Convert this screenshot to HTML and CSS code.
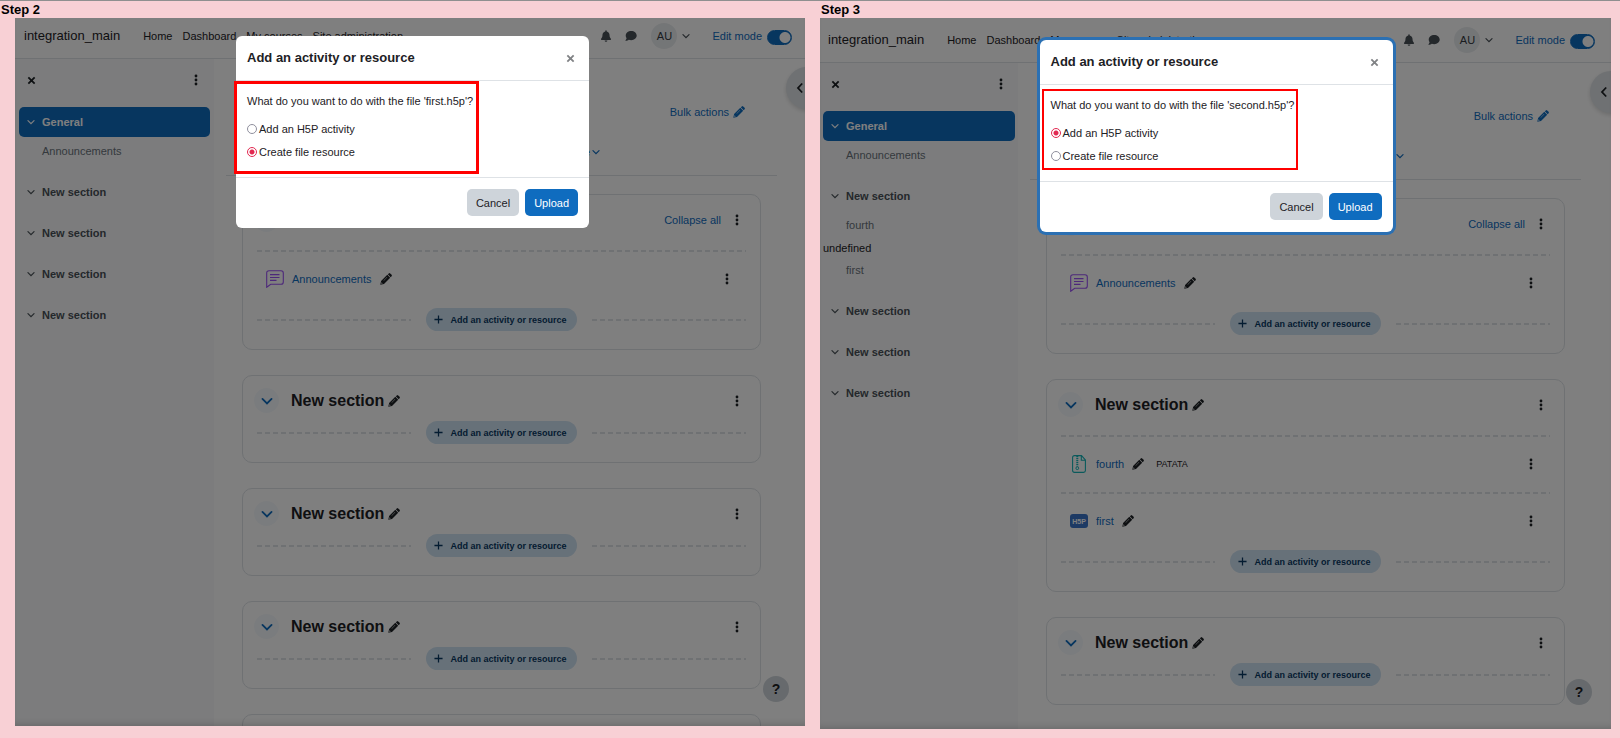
FILE: index.html
```html
<!DOCTYPE html>
<html lang="en">
<head>
    <meta charset="UTF-8">
    <meta name="viewport" content="width=device-width, initial-scale=1.0">
    <title>integration_main</title>
    <link rel="stylesheet" href="styles.css">
</head>
<body>
    <svg class="sprite" aria-hidden="true">
        <symbol id="chevron" viewBox="0 0 10 10"><path d="M1.200 3.200L5 7l3.800-3.800" fill="none" stroke="currentColor" stroke-width="1.500" stroke-linecap="round"/></symbol>
        <symbol id="left" viewBox="0 0 8 12"><path d="M6.200 1.500L2 6l4.200 4.500" fill="none" stroke="currentColor" stroke-width="1.800"/></symbol>
        <symbol id="cross" viewBox="0 0 10 10"><path d="M1.500 1.500l7 7M8.500 1.500l-7 7" fill="none" stroke="currentColor" stroke-width="2"/></symbol>
        <symbol id="plus" viewBox="0 0 10 10"><path d="M5 .5v9M.5 5h9" fill="none" stroke="currentColor" stroke-width="1.400"/></symbol>
        <symbol id="dots" viewBox="0 0 4 12"><circle cx="2" cy="2" r="1.400"/><circle cx="2" cy="6" r="1.400"/><circle cx="2" cy="10" r="1.400"/></symbol>
        <symbol id="pencil" viewBox="0 0 12 12"><path fill-rule="evenodd" d="M.3 11.700L1.100 8 7.300 1.800l2.900 2.900L4 10.900zM7.800 1.300L8.800.4q.7-.6 1.400 0l1.400 1.400q.6.700 0 1.400l-.9 1zM7 3.900L3.500 7.400l.3.300 3.500-3.500zM1.600 9.300l-.4 1.500 1.500-.4z"/></symbol>
        <symbol id="bell" viewBox="0 0 12 13"><path d="M6 .3c.5 0 .8.300.8.8v.4c1.800.4 3 1.800 3 3.700 0 2.500.7 3.500 1.500 4.300.4.500.2 1.300-.6 1.300H1.300c-.8 0-1-.8-.6-1.300.8-.8 1.500-1.800 1.500-4.300 0-1.900 1.200-3.300 3-3.700v-.4c0-.5.300-.8.800-.8zM4.500 11.300h3a1.500 1.500 0 0 1-3 0z"/></symbol>
        <symbol id="comment" viewBox="0 0 12 12"><path d="M6.200 1C9.300 1 11.700 3 11.700 5.600s-2.400 4.600-5.500 4.600c-.9 0-1.700-.2-2.400-.5-.8.600-1.900 1.100-3.200 1.100-.3 0-.3-.3-.2-.4.600-.6 1-1.400 1.200-2.100C1 7.500.7 6.600.7 5.600.7 3 3.100 1 6.200 1z"/></symbol>
        <symbol id="forum" viewBox="0 0 18 18"><path d="M3 .700h12q2.300 0 2.300 2.300v9q0 2.300-2.300 2.300H4.700L.7 17.300V3Q.7.700 3 .700zM4 4.600h9.500M4 7.500h9.500M4 10.400h6.500" fill="none" stroke="currentColor" stroke-width="1.100"/></symbol>
        <symbol id="archive" viewBox="0 0 14 18"><path d="M2.500.6h7L13.400 5v10.500q0 1.900-1.900 1.900h-9Q.6 17.400.6 15.500v-13Q.6.600 2.500.600zM9.300.6v4.600h4" fill="none" stroke="currentColor" stroke-width="1.100"/><path d="M5.300 1v10.500" fill="none" stroke="currentColor" stroke-width="2" stroke-dasharray="1.300 .7"/><circle cx="5.300" cy="13.200" r="1.400" fill="none" stroke="currentColor"/></symbol>
    </svg>

    <main class="steps">
        <section class="step">
            <h1 class="step-title">Step 2</h1>
            <div class="screen">
                <header class="navbar">
                    <a class="brand" href="#">integration_main</a>
                    <nav class="primary-nav">
                        <a href="#">Home</a>
                        <a href="#">Dashboard</a>
                        <a href="#">My courses</a>
                        <a href="#">Site administration</a>
                    </nav>
                    <div class="user-nav">
                        <button class="icon-button" aria-label="Notifications"><svg class="icon-nav"><use href="#bell"/></svg></button>
                        <button class="icon-button" aria-label="Messages"><svg class="icon-nav"><use href="#comment"/></svg></button>
                        <button class="user-menu" aria-label="User menu"><span class="avatar">AU</span><svg class="icon-chevron"><use href="#chevron"/></svg></button>
                        <label class="edit-mode">Edit mode <input type="checkbox" class="switch" checked></label>
                    </div>
                </header>
                <div class="page">
                    <aside class="sidebar">
                        <div class="sidebar-head">
                            <button class="icon-button" aria-label="Close course index"><svg class="icon-close"><use href="#cross"/></svg></button>
                            <button class="icon-button" aria-label="Course index options"><svg class="icon-dots"><use href="#dots"/></svg></button>
                        </div>
                        <ul class="index">
                            <li class="index-section">
                                <a class="index-title active" href="#"><svg class="icon-chevron"><use href="#chevron"/></svg>General</a>
                                <a class="index-item" href="#">Announcements</a>
                            </li>
                            <li class="index-section"><a class="index-title" href="#"><svg class="icon-chevron"><use href="#chevron"/></svg>New section</a></li>
                            <li class="index-section"><a class="index-title" href="#"><svg class="icon-chevron"><use href="#chevron"/></svg>New section</a></li>
                            <li class="index-section"><a class="index-title" href="#"><svg class="icon-chevron"><use href="#chevron"/></svg>New section</a></li>
                            <li class="index-section"><a class="index-title" href="#"><svg class="icon-chevron"><use href="#chevron"/></svg>New section</a></li>
                        </ul>
                    </aside>
                    <div class="content">
                        <div class="bulk"><a href="#">Bulk actions <svg class="icon-pencil"><use href="#pencil"/></svg></a></div>
                        <nav class="tabs"><a href="#">More <svg class="icon-chevron"><use href="#chevron"/></svg></a></nav>

                        <section class="card">
                            <div class="card-head">
                                <button class="toggle" aria-label="Collapse section"><svg class="icon-toggle"><use href="#chevron"/></svg></button>
                                <a class="collapse-all" href="#">Collapse all</a>
                                <button class="icon-button" aria-label="Section menu"><svg class="icon-dots"><use href="#dots"/></svg></button>
                            </div>
                            <ul class="activities">
                                <li class="activity">
                                    <svg class="icon-activity forum"><use href="#forum"/></svg>
                                    <a href="#">Announcements</a>
                                    <svg class="icon-pencil"><use href="#pencil"/></svg>
                                    <button class="icon-button" aria-label="Activity menu"><svg class="icon-dots"><use href="#dots"/></svg></button>
                                </li>
                            </ul>
                            <div class="add-row"><button class="add-button"><svg class="icon-plus"><use href="#plus"/></svg>Add an activity or resource</button></div>
                        </section>

                        <section class="card">
                            <div class="card-head">
                                <button class="toggle" aria-label="Collapse section"><svg class="icon-toggle"><use href="#chevron"/></svg></button>
                                <h2>New section</h2>
                                <svg class="icon-pencil"><use href="#pencil"/></svg>
                                <button class="icon-button" aria-label="Section menu"><svg class="icon-dots"><use href="#dots"/></svg></button>
                            </div>
                            <div class="add-row"><button class="add-button"><svg class="icon-plus"><use href="#plus"/></svg>Add an activity or resource</button></div>
                        </section>

                        <section class="card">
                            <div class="card-head">
                                <button class="toggle" aria-label="Collapse section"><svg class="icon-toggle"><use href="#chevron"/></svg></button>
                                <h2>New section</h2>
                                <svg class="icon-pencil"><use href="#pencil"/></svg>
                                <button class="icon-button" aria-label="Section menu"><svg class="icon-dots"><use href="#dots"/></svg></button>
                            </div>
                            <div class="add-row"><button class="add-button"><svg class="icon-plus"><use href="#plus"/></svg>Add an activity or resource</button></div>
                        </section>

                        <section class="card">
                            <div class="card-head">
                                <button class="toggle" aria-label="Collapse section"><svg class="icon-toggle"><use href="#chevron"/></svg></button>
                                <h2>New section</h2>
                                <svg class="icon-pencil"><use href="#pencil"/></svg>
                                <button class="icon-button" aria-label="Section menu"><svg class="icon-dots"><use href="#dots"/></svg></button>
                            </div>
                            <div class="add-row"><button class="add-button"><svg class="icon-plus"><use href="#plus"/></svg>Add an activity or resource</button></div>
                        </section>

                        <section class="card card-empty"></section>
                    </div>
                </div>

                <button class="drawer-toggle" aria-label="Open block drawer"><svg class="icon-left"><use href="#left"/></svg></button>
                <button class="help">?</button>

                <div class="backdrop">
                    <div class="modal" role="dialog" aria-label="Add an activity or resource">
                        <div class="modal-head">
                            <h3>Add an activity or resource</h3>
                            <button class="icon-button" aria-label="Close"><svg class="icon-close"><use href="#cross"/></svg></button>
                        </div>
                        <div class="modal-body">
                            <p>What do you want to do with the file 'first.h5p'?</p>
                            <label><input type="radio" name="first"> Add an H5P activity</label>
                            <label><input type="radio" name="first" checked> Create file resource</label>
                            <div class="highlight"></div>
                        </div>
                        <div class="modal-foot">
                            <button class="btn btn-secondary">Cancel</button>
                            <button class="btn btn-primary">Upload</button>
                        </div>
                    </div>
                </div>
            </div>
        </section>

        <section class="step step-last">
            <h1 class="step-title">Step 3</h1>
            <div class="screen">
                <header class="navbar">
                    <a class="brand" href="#">integration_main</a>
                    <nav class="primary-nav">
                        <a href="#">Home</a>
                        <a href="#">Dashboard</a>
                        <a href="#">My courses</a>
                        <a href="#">Site administration</a>
                    </nav>
                    <div class="user-nav">
                        <button class="icon-button" aria-label="Notifications"><svg class="icon-nav"><use href="#bell"/></svg></button>
                        <button class="icon-button" aria-label="Messages"><svg class="icon-nav"><use href="#comment"/></svg></button>
                        <button class="user-menu" aria-label="User menu"><span class="avatar">AU</span><svg class="icon-chevron"><use href="#chevron"/></svg></button>
                        <label class="edit-mode">Edit mode <input type="checkbox" class="switch" checked></label>
                    </div>
                </header>
                <div class="page">
                    <aside class="sidebar">
                        <div class="sidebar-head">
                            <button class="icon-button" aria-label="Close course index"><svg class="icon-close"><use href="#cross"/></svg></button>
                            <button class="icon-button" aria-label="Course index options"><svg class="icon-dots"><use href="#dots"/></svg></button>
                        </div>
                        <ul class="index">
                            <li class="index-section">
                                <a class="index-title active" href="#"><svg class="icon-chevron"><use href="#chevron"/></svg>General</a>
                                <a class="index-item" href="#">Announcements</a>
                            </li>
                            <li class="index-section">
                                <a class="index-title" href="#"><svg class="icon-chevron"><use href="#chevron"/></svg>New section</a>
                                <a class="index-item" href="#">fourth</a>
                                <span class="index-text">undefined</span>
                                <a class="index-item" href="#">first</a>
                            </li>
                            <li class="index-section"><a class="index-title" href="#"><svg class="icon-chevron"><use href="#chevron"/></svg>New section</a></li>
                            <li class="index-section"><a class="index-title" href="#"><svg class="icon-chevron"><use href="#chevron"/></svg>New section</a></li>
                            <li class="index-section"><a class="index-title" href="#"><svg class="icon-chevron"><use href="#chevron"/></svg>New section</a></li>
                        </ul>
                    </aside>
                    <div class="content">
                        <div class="bulk"><a href="#">Bulk actions <svg class="icon-pencil"><use href="#pencil"/></svg></a></div>
                        <nav class="tabs"><a href="#">More <svg class="icon-chevron"><use href="#chevron"/></svg></a></nav>

                        <section class="card">
                            <div class="card-head">
                                <button class="toggle" aria-label="Collapse section"><svg class="icon-toggle"><use href="#chevron"/></svg></button>
                                <a class="collapse-all" href="#">Collapse all</a>
                                <button class="icon-button" aria-label="Section menu"><svg class="icon-dots"><use href="#dots"/></svg></button>
                            </div>
                            <ul class="activities">
                                <li class="activity">
                                    <svg class="icon-activity forum"><use href="#forum"/></svg>
                                    <a href="#">Announcements</a>
                                    <svg class="icon-pencil"><use href="#pencil"/></svg>
                                    <button class="icon-button" aria-label="Activity menu"><svg class="icon-dots"><use href="#dots"/></svg></button>
                                </li>
                            </ul>
                            <div class="add-row"><button class="add-button"><svg class="icon-plus"><use href="#plus"/></svg>Add an activity or resource</button></div>
                        </section>

                        <section class="card">
                            <div class="card-head">
                                <button class="toggle" aria-label="Collapse section"><svg class="icon-toggle"><use href="#chevron"/></svg></button>
                                <h2>New section</h2>
                                <svg class="icon-pencil"><use href="#pencil"/></svg>
                                <button class="icon-button" aria-label="Section menu"><svg class="icon-dots"><use href="#dots"/></svg></button>
                            </div>
                            <ul class="activities">
                                <li class="activity">
                                    <svg class="icon-activity archive"><use href="#archive"/></svg>
                                    <a href="#">fourth</a>
                                    <svg class="icon-pencil"><use href="#pencil"/></svg>
                                    <span class="badge">PATATA</span>
                                    <button class="icon-button" aria-label="Activity menu"><svg class="icon-dots"><use href="#dots"/></svg></button>
                                </li>
                                <li class="activity">
                                    <svg class="icon-activity h5p" viewBox="0 0 18 18"><rect y="2" width="18" height="14" rx="3" fill="#3b74c8"/><text x="9" y="12" text-anchor="middle">H5P</text></svg>
                                    <a href="#">first</a>
                                    <svg class="icon-pencil"><use href="#pencil"/></svg>
                                    <button class="icon-button" aria-label="Activity menu"><svg class="icon-dots"><use href="#dots"/></svg></button>
                                </li>
                            </ul>
                            <div class="add-row"><button class="add-button"><svg class="icon-plus"><use href="#plus"/></svg>Add an activity or resource</button></div>
                        </section>

                        <section class="card">
                            <div class="card-head">
                                <button class="toggle" aria-label="Collapse section"><svg class="icon-toggle"><use href="#chevron"/></svg></button>
                                <h2>New section</h2>
                                <svg class="icon-pencil"><use href="#pencil"/></svg>
                                <button class="icon-button" aria-label="Section menu"><svg class="icon-dots"><use href="#dots"/></svg></button>
                            </div>
                            <div class="add-row"><button class="add-button"><svg class="icon-plus"><use href="#plus"/></svg>Add an activity or resource</button></div>
                        </section>
                    </div>
                </div>

                <button class="drawer-toggle" aria-label="Open block drawer"><svg class="icon-left"><use href="#left"/></svg></button>
                <button class="help">?</button>

                <div class="backdrop">
                    <div class="modal focused" role="dialog" aria-label="Add an activity or resource">
                        <div class="modal-head">
                            <h3>Add an activity or resource</h3>
                            <button class="icon-button" aria-label="Close"><svg class="icon-close"><use href="#cross"/></svg></button>
                        </div>
                        <div class="modal-body">
                            <p>What do you want to do with the file 'second.h5p'?</p>
                            <label><input type="radio" name="second" checked> Add an H5P activity</label>
                            <label><input type="radio" name="second"> Create file resource</label>
                            <div class="highlight thin"></div>
                        </div>
                        <div class="modal-foot">
                            <button class="btn btn-secondary">Cancel</button>
                            <button class="btn btn-primary">Upload</button>
                        </div>
                    </div>
                </div>
            </div>
        </section>
    </main>
</body>
</html>
```

FILE: styles.css
```css
:root {
    --primary: #0f6cbf;
    --text: #1d2125;
    --muted: #6a737b;
    --border: #dee2e6;
}

* {
    box-sizing: border-box;
}

body {
    margin: 0;
    height: 100vh;
    overflow: hidden;
    background-color: #f8d0d5;
    border-top: 1px solid #8f8f8f;
    color: var(--text);
    font-family: "Liberation Sans", Arial, sans-serif;
    font-size: 11px;
    line-height: 16px;
}

h1, h2, h3, p, ul {
    margin: 0;
    padding: 0;
}

ul {
    list-style: none;
}

a {
    color: var(--primary);
    text-decoration: none;
}

button {
    padding: 0;
    border: none;
    background: none;
    color: inherit;
    font: inherit;
    cursor: pointer;
}

svg {
    display: block;
    flex: none;
    fill: currentColor;
}

.sprite {
    position: absolute;
    width: 0;
    height: 0;
}

.icon-button {
    display: flex;
}

.icon-nav { width: 12px; height: 12px; }
.icon-chevron { width: 8px; height: 8px; }
.icon-toggle { width: 12px; height: 12px; }
.icon-close { width: 9px; height: 9px; }
.icon-dots { width: 4px; height: 12px; }
.icon-pencil { width: 12px; height: 12px; }
.icon-plus { width: 9px; height: 9px; }
.icon-left { width: 8px; height: 12px; }
.icon-activity { width: 18px; height: 18px; }

/* two screens side by side */
.steps {
    display: grid;
    grid-template-columns: 41fr 40fr;
    height: 100%;
}

.step {
    display: flex;
    flex-direction: column;
    min-height: 0;
    padding: 0 15px 12px 15px;
}

.step-last {
    padding: 0 9px 9px 0;
}

.step-title {
    height: 17px;
    margin-left: -14px;
    font-size: 13px;
    line-height: 17px;
    color: #000;
}

.step-last .step-title {
    margin-left: 1px;
}

.screen {
    position: relative;
    flex: 1;
    min-height: 0;
    overflow: hidden;
    background-color: #fff;
}

.step-last .screen {
    padding-top: 4px;
}

.navbar {
    display: flex;
    align-items: center;
    height: 41px;
    padding: 0 13px 4px 9px;
    border-bottom: 1px solid var(--border);
}

.step-last .navbar {
    padding: 0 16px 4px 8px;
}

.brand {
    margin-right: 23px;
    color: var(--text);
    font-size: 13px;
}

.primary-nav {
    display: flex;
    gap: 10px;
}

.primary-nav a {
    color: var(--text);
}

.user-nav {
    display: flex;
    align-items: center;
    gap: 13px;
    margin-left: auto;
    color: #495057;
}

.user-menu {
    display: flex;
    align-items: center;
    gap: 5px;
    margin: 0 9px 0 1px;
}

.avatar {
    width: 26px;
    height: 26px;
    border-radius: 50%;
    background-color: #e9ecef;
    color: #343a40;
    line-height: 26px;
    text-align: center;
}

.edit-mode {
    display: flex;
    align-items: center;
    gap: 5px;
    color: var(--primary);
}

.switch {
    appearance: none;
    width: 25px;
    height: 15px;
    margin: 2px 0 0;
    border: 1px solid var(--primary);
    border-radius: 8px;
    background: radial-gradient(circle at 17px 50%, #fff 5px, var(--primary) 6px);
}

.page {
    display: flex;
}

/* course index */
.sidebar {
    flex: 0 0 199px;
    min-height: 100vh;
    padding: 0 4px;
    background-color: #f8f9fa;
}

.step-last .sidebar {
    flex-basis: 198px;
    padding: 0 3px;
}

.sidebar-head {
    display: flex;
    align-items: center;
    justify-content: space-between;
    height: 42px;
    margin-bottom: 6px;
    padding: 0 12px 0 8px;
}

.index-section {
    margin-bottom: 11px;
}

.index-title {
    display: flex;
    align-items: center;
    gap: 7px;
    height: 30px;
    padding-left: 8px;
    border-radius: 5px;
    color: #495057;
    font-weight: bold;
}

.index-title.active {
    background-color: var(--primary);
    color: #fff;
}

.index-item {
    display: block;
    padding-left: 23px;
    color: var(--muted);
    line-height: 29px;
}

.index-text {
    display: block;
}

/* course content */
.content {
    flex: 1;
    padding: 45px 28px 0 12px;
}

.step-last .content {
    padding-right: 30px;
}

.bulk,
.tabs {
    display: flex;
    justify-content: flex-end;
}

.bulk {
    padding-right: 32px;
}

.tabs {
    margin-bottom: 18px;
    padding: 24px 177px 15px 0;
    border-bottom: 1px solid var(--border);
}

.bulk a,
.tabs a {
    display: flex;
    align-items: center;
    gap: 4px;
}

.tabs a {
    gap: 2px;
}

.card {
    margin: 0 16px 25px;
    padding: 12px 0 18px;
    border: 1px solid var(--border);
    border-radius: 10px;
}

.card-empty {
    height: 88px;
}

.card-head {
    display: flex;
    align-items: center;
    height: 25px;
    margin-bottom: 8px;
    padding: 0 21px 0 11px;
}

.card-head h2 {
    margin: 0 4px 0 12px;
    font-size: 16px;
}

.card-head .icon-button,
.activity .icon-button {
    margin-left: auto;
}

.card-head .collapse-all {
    margin-left: auto;
}

.collapse-all + .icon-button {
    margin-left: 14px;
}

.toggle {
    display: flex;
    align-items: center;
    justify-content: center;
    width: 25px;
    height: 25px;
    border-radius: 50%;
    background-color: #f5f9fc;
    color: var(--primary);
}

.activities {
    margin: 18px 14px 0;
}

.activity {
    display: flex;
    align-items: center;
    height: 57px;
    padding: 0 17px 0 9px;
    background: repeating-linear-gradient(90deg, #dee2e6 0 5px, transparent 5px 8px) top / 100% 2px no-repeat;
}

/* space between the last activity and the add button */
.activities + .add-row {
    margin-top: 1px;
}

.activity a {
    margin: 0 8px;
}

.forum { color: #9b51f5; }
.archive { color: #14b5b8; }

.h5p text {
    fill: #fff;
    font-size: 7px;
    font-weight: bold;
}

.badge {
    margin-left: 12px;
    font-size: 9px;
}

.add-row {
    display: flex;
    align-items: center;
    gap: 15px;
    margin: 0 14px;
}

.add-row::before,
.add-row::after {
    content: "";
    flex: 1;
    height: 2px;
    background: repeating-linear-gradient(90deg, #dee2e6 0 5px, transparent 5px 8px);
}

.add-button {
    display: flex;
    align-items: center;
    gap: 7px;
    height: 23px;
    padding: 0 10px 0 8px;
    border-radius: 12px;
    background-color: #cfe2f2;
    color: #083863;
    font-size: 9px;
    font-weight: bold;
}

.drawer-toggle {
    position: absolute;
    top: 49px;
    right: -23px;
    width: 42px;
    height: 42px;
    padding-left: 10px;
    border-radius: 50%;
    background-color: #dee2e6;
    box-shadow: 0 2px 4px rgba(0,0,0,0.15);
}

.step-last .drawer-toggle {
    top: 53px;
    right: -21px;
}

.help {
    position: absolute;
    right: 16px;
    bottom: 24px;
    width: 26px;
    height: 26px;
    border-radius: 50%;
    background-color: #ced4da;
    font-size: 14px;
    font-weight: bold;
}

.step-last .help {
    right: 19px;
}

/* dialog */
.backdrop {
    position: absolute;
    inset: 0;
    display: flex;
    align-items: flex-start;
    justify-content: center;
    padding: 18px 0 0 5px;
    background-color: rgba(0,0,0,0.5);
    box-shadow: inset 0 -6px 6px -4px rgba(0,0,0,0.15);
}

.step-last .backdrop {
    padding: 22px 0 0 1px;
}

.modal {
    width: 353px;
    border-radius: 6px;
    background-color: #fff;
}

.modal.focused {
    box-shadow: 0 0 0 3px #2b70b3;
}

.modal-head {
    display: flex;
    align-items: center;
    justify-content: space-between;
    height: 45px;
    padding: 0 14px 0 11px;
    border-bottom: 1px solid var(--border);
}

.modal-head h3 {
    font-size: 13px;
}

.modal-head .icon-button {
    color: #808285;
}

.modal-body {
    position: relative;
    padding: 12px 11px 14px;
}

.modal-body p {
    margin-bottom: 8px;
}

.modal-body label {
    display: flex;
    align-items: center;
    gap: 2px;
    height: 23px;
}

.modal-body input {
    appearance: none;
    width: 10px;
    height: 10px;
    margin: 0;
    border: 1px solid #8f8f9d;
    border-radius: 50%;
}

.modal-body input:checked {
    border-color: #e22850;
    background: radial-gradient(circle, #e22850 2px, #fff 3px);
}

/* red frame drawn over the question */
.highlight {
    position: absolute;
    top: 0;
    left: -2px;
    width: 245px;
    height: 93px;
    border: 3px solid #f00;
}

.highlight.thin {
    top: 4px;
    left: 2px;
    width: 256px;
    height: 81px;
    border-width: 2px;
}

.modal-foot {
    display: flex;
    align-items: center;
    justify-content: flex-end;
    gap: 6px;
    height: 51px;
    padding: 0 11px 1px;
    border-top: 1px solid var(--border);
}

.btn {
    height: 27px;
    padding: 0 9px;
    border-radius: 5px;
}

.btn-primary {
    background-color: var(--primary);
    color: #fff;
}

.btn-secondary {
    background-color: #ced4da;
}
```
